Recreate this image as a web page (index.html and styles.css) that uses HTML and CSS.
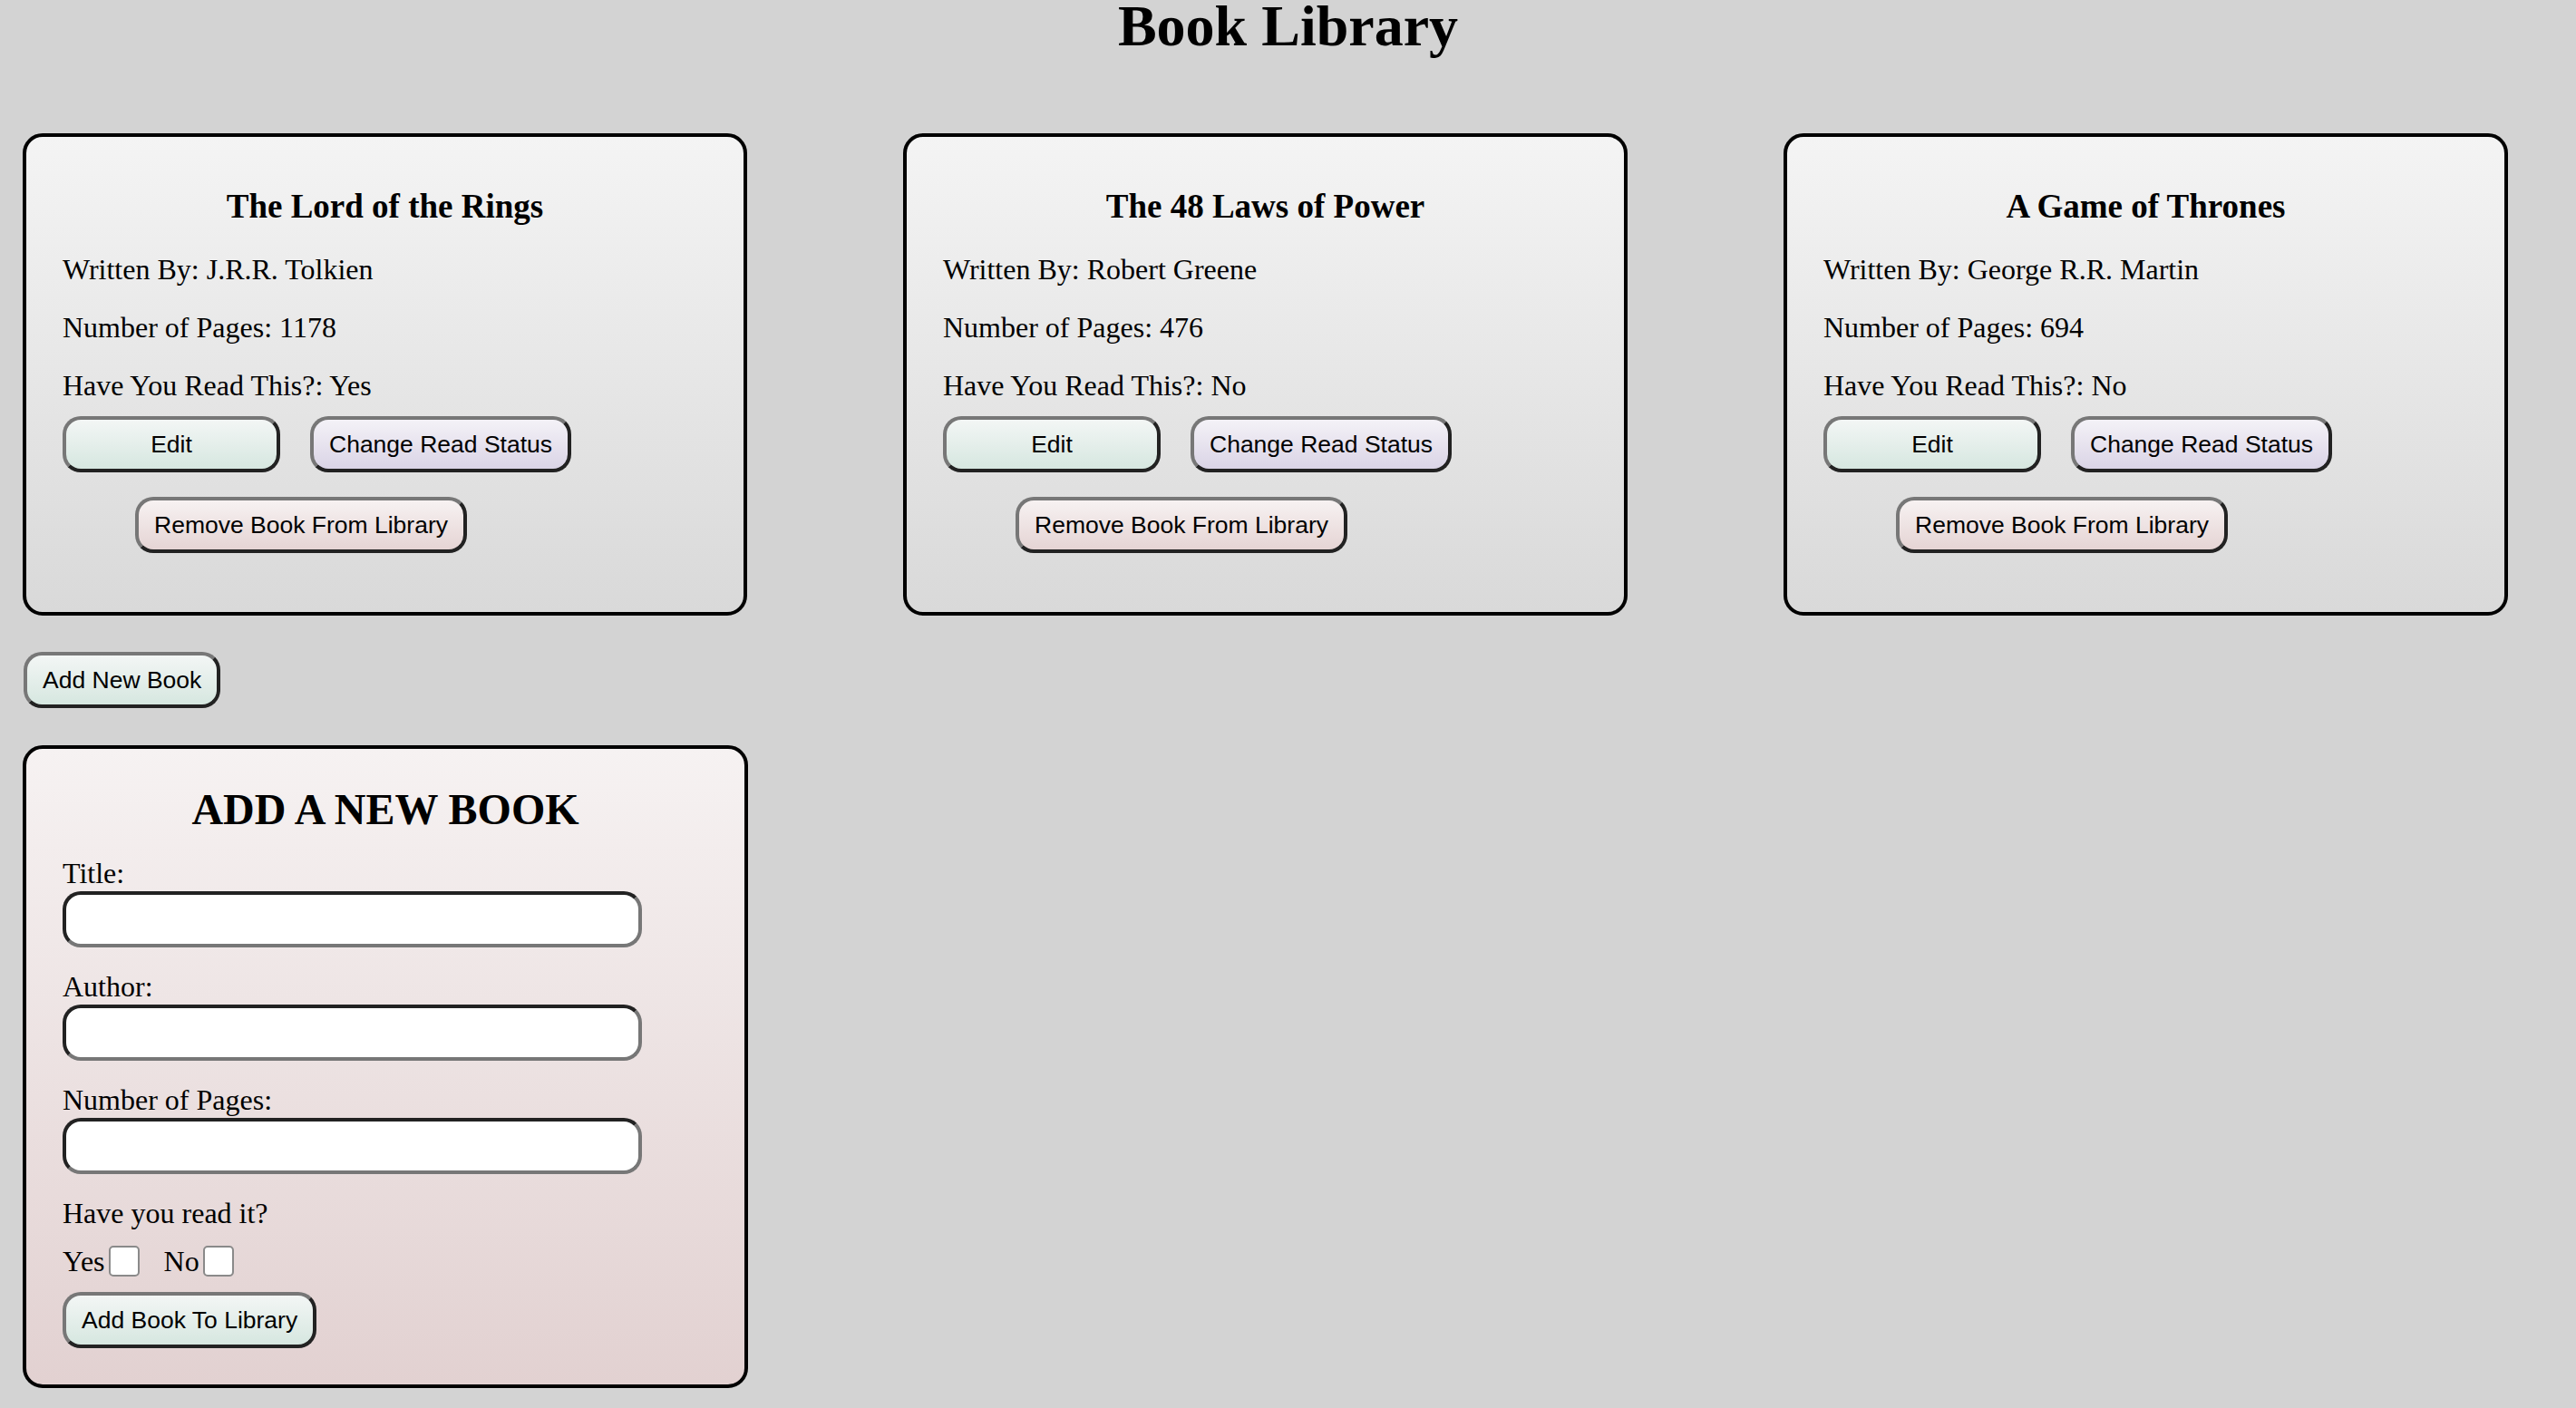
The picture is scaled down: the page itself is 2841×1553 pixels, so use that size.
FILE: index.html
```html
<!DOCTYPE html>
<html lang="en">
<head>
    <meta charset="UTF-8">
    <meta name="viewport" content="width=device-width, initial-scale=1.0">
    <title>Book Library</title>
    <link rel="stylesheet" href="styles.css">
</head>
<body>
    <h1>Book Library</h1>

    <!-- Books -->
    <div class="library">
        <div class="book-card">
            <h3>The Lord of the Rings</h3>
            <div class="book-details">
                <p>Written By: J.R.R. Tolkien</p>
                <p>Number of Pages: 1178</p>
                <p>Have You Read This?: Yes</p>
            </div>
            <div class="book-actions">
                <button class="btn btn-edit">Edit</button>
                <button class="btn btn-status">Change Read Status</button>
                <button class="btn btn-remove">Remove Book From Library</button>
            </div>
        </div>
        <div class="book-card">
            <h3>The 48 Laws of Power</h3>
            <div class="book-details">
                <p>Written By: Robert Greene</p>
                <p>Number of Pages: 476</p>
                <p>Have You Read This?: No</p>
            </div>
            <div class="book-actions">
                <button class="btn btn-edit">Edit</button>
                <button class="btn btn-status">Change Read Status</button>
                <button class="btn btn-remove">Remove Book From Library</button>
            </div>
        </div>
        <div class="book-card">
            <h3>A Game of Thrones</h3>
            <div class="book-details">
                <p>Written By: George R.R. Martin</p>
                <p>Number of Pages: 694</p>
                <p>Have You Read This?: No</p>
            </div>
            <div class="book-actions">
                <button class="btn btn-edit">Edit</button>
                <button class="btn btn-status">Change Read Status</button>
                <button class="btn btn-remove">Remove Book From Library</button>
            </div>
        </div>
    </div>

    <button class="btn btn-new">Add New Book</button>

    <!-- New book form -->
    <form class="book-form">
        <h2>ADD A NEW BOOK</h2>
        <div class="form-field">
            <label for="title">Title:</label>
            <input type="text" id="title">
        </div>
        <div class="form-field">
            <label for="author">Author:</label>
            <input type="text" id="author">
        </div>
        <div class="form-field">
            <label for="pages">Number of Pages:</label>
            <input type="text" id="pages">
        </div>
        <p class="read-question">Have you read it?</p>
        <div class="read-options">
            <label for="read-yes">Yes</label>
            <input type="checkbox" id="read-yes">
            <label for="read-no">No</label>
            <input type="checkbox" id="read-no">
        </div>
        <button type="button" class="btn">Add Book To Library</button>
    </form>
</body>
</html>
```

FILE: styles.css
```css
/* General Styles */
* {
    box-sizing: border-box;
}

body {
    margin: 0;
    padding: 0 25px;
    background-color: lightgray;
    font-family: "Liberation Serif", "Times New Roman", serif;
    font-size: 32px;
    line-height: 32px;
    color: #000;
}

h1 {
    margin: 0;
    font-size: 64px;
    line-height: 58px;
    text-align: center;
}

/* Book Cards */
.library {
    display: flex;
    flex-wrap: wrap;
    gap: 172px;
    margin-top: 89px;
}

.book-card {
    width: 799px;
    padding: 26px 40px 65px;
    border: 4px solid #000;
    border-radius: 22px;
    background: linear-gradient(#f4f4f4, #d9d9d9);
}

.book-card h3 {
    margin: 32px 0 35px;
    font-size: 37px;
    line-height: 37px;
    text-align: center;
}

.book-details {
    display: flex;
    flex-direction: column;
    gap: 32px;
}

.book-details p {
    margin: 0;
}

.book-actions {
    display: flex;
    flex-wrap: wrap;
    column-gap: 33px;
    row-gap: 27px;
    margin-top: 18px;
}

/* Buttons */
.btn {
    padding: 12px 17px;
    border: 4px solid;
    border-color: #777 #222 #222 #777;
    border-radius: 20px;
    font-family: "Liberation Sans", Arial, sans-serif;
    font-size: 26.5px;
    line-height: 30px;
    color: #000;
    background: linear-gradient(#f3f6f5, #d6e7e0);
    cursor: pointer;
}

.btn-edit {
    width: 240px;
}

.btn-status {
    background: linear-gradient(#f4f2f7, #dad4e6);
}

.btn-remove {
    margin-left: 80px;
    background: linear-gradient(#f7f2f2, #e5d4d4);
}

.btn-new {
    display: block;
    margin: 40px 0 41px 1px;
}

/* Form */
.book-form {
    width: 800px;
    padding: 26px 40px 40px;
    border: 4px solid #000;
    border-radius: 22px;
    background: linear-gradient(#f6f2f2, #e2d1d1);
}

.book-form h2 {
    margin: 17px 0 30px;
    font-size: 48px;
    line-height: 48px;
    text-align: center;
}

.form-field {
    margin-bottom: 27px;
}

.form-field label {
    display: block;
    margin-bottom: 4px;
}

.form-field input {
    display: block;
    width: 639px;
    height: 62px;
    padding: 0 16px;
    border: 4px solid;
    border-color: #222 #777 #777 #222;
    border-radius: 20px;
    background-color: #fff;
    font-size: 28px;
    outline: none;
}

.read-question {
    margin: 0 0 20px;
}

.read-options {
    display: flex;
    align-items: center;
    height: 34px;
    margin-bottom: 17px;
}

.read-options input {
    appearance: none;
    width: 34px;
    height: 34px;
    margin: 0 27px 0 4px;
    border: 2px solid #8a8a8a;
    border-radius: 5px;
    background-color: #fff;
}
```
